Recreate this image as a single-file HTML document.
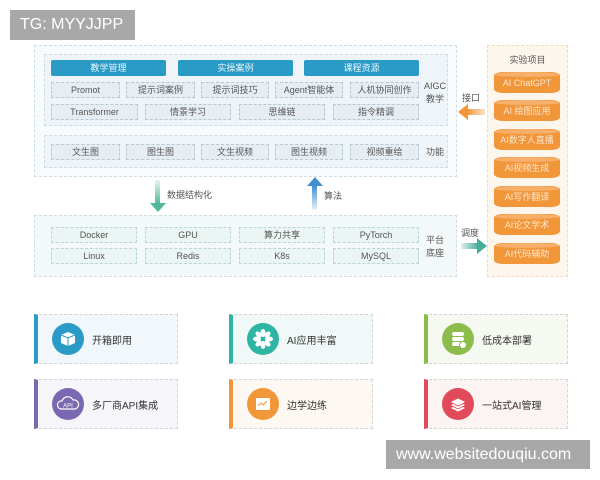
<!DOCTYPE html>
<html><head><meta charset="utf-8"><style>
*{margin:0;padding:0;box-sizing:border-box}
body{width:600px;height:480px;background:#fff;position:relative;overflow:hidden;font-family:"Liberation Sans","Noto Sans CJK SC",sans-serif;color:#444}
.a{position:absolute}
.box{position:absolute;border:1px dashed #cfdde6}
.it{position:absolute;height:16px;background:#e6eef4;border:1px dashed #b9c9d4;font-size:9px;line-height:14px;text-align:center;color:#555}
.pl{background:#eaf5f4;border-color:#bcd6d4}
.bb{position:absolute;height:16px;background:#2a9bc6;color:#e8f6fb;font-size:9px;line-height:16px;text-align:center;border-radius:2px}
.lb{position:absolute;font-size:9px;color:#555;line-height:13px;text-align:center}
.cy{position:absolute;left:494px;width:66px;height:21px;background:#f2963a;border-radius:9px/4px;color:#fde6cc;font-size:9px;line-height:22px;text-align:center}
.cy:before{content:"";position:absolute;left:0;right:0;top:0;height:5px;border-radius:50%;background:#f6b06b}
.card{position:absolute;width:144px;height:50px;border:1px dashed #d4d4d4;border-left:4px solid;font-size:10px;color:#333}
.card .c{position:absolute;left:14px;top:8px;width:32px;height:32px;border-radius:50%}
.card .c svg{position:absolute;left:0;top:0}
.card span{position:absolute;left:54px;top:17px}
.wm{position:absolute;background:#a8a8a8;color:#fff;font-size:16px}
</style></head><body>
<div class="box" style="left:34px;top:45px;width:423px;height:132px;background:#f8fbfd"></div>
<div class="box" style="left:44px;top:54px;width:404px;height:72px;background:#eef4f8"></div>
<div class="box" style="left:44px;top:135px;width:404px;height:33px;background:#eef4f8"></div>
<div class="bb" style="left:51px;top:60px;width:115px">教学管理</div>
<div class="bb" style="left:178px;top:60px;width:115px">实操案例</div>
<div class="bb" style="left:304px;top:60px;width:115px">课程资源</div>
<div class="it" style="left:51px;top:82px;width:69px">Promot</div>
<div class="it" style="left:126px;top:82px;width:69px">提示词案例</div>
<div class="it" style="left:201px;top:82px;width:68px">提示词技巧</div>
<div class="it" style="left:275px;top:82px;width:68px">Agent智能体</div>
<div class="it" style="left:350px;top:82px;width:69px">人机协同创作</div>
<div class="it" style="left:51px;top:104px;width:87px">Transformer</div>
<div class="it" style="left:145px;top:104px;width:86px">情景学习</div>
<div class="it" style="left:239px;top:104px;width:86px">思维链</div>
<div class="it" style="left:333px;top:104px;width:86px">指令精调</div>
<div class="lb" style="left:422px;top:80px;width:26px">AIGC<br>教学</div>
<div class="it" style="left:51px;top:144px;width:69px">文生图</div>
<div class="it" style="left:126px;top:144px;width:69px">图生图</div>
<div class="it" style="left:201px;top:144px;width:68px">文生视频</div>
<div class="it" style="left:275px;top:144px;width:68px">图生视频</div>
<div class="it" style="left:350px;top:144px;width:69px">视频重绘</div>
<div class="lb" style="left:422px;top:146px;width:26px">功能</div>
<div class="a" style="left:155px;top:180px;width:5px;height:24px;background:linear-gradient(#e8f6f2,#4fb79a)"></div>
<div class="a" style="left:150px;top:203px;border-left:8px solid transparent;border-right:8px solid transparent;border-top:9px solid #4fb79a"></div>
<div class="lb" style="left:167px;top:189px">数据结构化</div>
<div class="a" style="left:312px;top:186px;width:5px;height:24px;background:linear-gradient(#3f8fd0,#e8f2fa)"></div>
<div class="a" style="left:307px;top:177px;border-left:8px solid transparent;border-right:8px solid transparent;border-bottom:9px solid #3f8fd0"></div>
<div class="lb" style="left:324px;top:190px">算法</div>
<div class="box" style="left:34px;top:215px;width:423px;height:62px;background:#f2f9f8"></div>
<div class="it pl" style="left:51px;top:227px;width:86px">Docker</div>
<div class="it pl" style="left:145px;top:227px;width:86px">GPU</div>
<div class="it pl" style="left:239px;top:227px;width:86px">算力共享</div>
<div class="it pl" style="left:333px;top:227px;width:86px">PyTorch</div>
<div class="it pl" style="left:51px;top:248px;width:86px">Linux</div>
<div class="it pl" style="left:145px;top:248px;width:86px">Redis</div>
<div class="it pl" style="left:239px;top:248px;width:86px">K8s</div>
<div class="it pl" style="left:333px;top:248px;width:86px">MySQL</div>
<div class="lb" style="left:422px;top:234px;width:26px">平台<br>底座</div>
<div class="box" style="left:487px;top:45px;width:81px;height:232px;background:#fdf6ec;border-color:#eedcc4"></div>
<div class="lb" style="left:487px;top:54px;width:81px">实验项目</div>
<div class="cy" style="top:72px">AI ChatGPT</div>
<div class="cy" style="top:100px">AI 绘图应用</div>
<div class="cy" style="top:129px">AI数字人直播</div>
<div class="cy" style="top:157px">AI视频生成</div>
<div class="cy" style="top:186px">AI写作翻译</div>
<div class="cy" style="top:214px">AI论文学术</div>
<div class="cy" style="top:243px">AI代码辅助</div>
<div class="lb" style="left:462px;top:92px">接口</div>
<div class="a" style="left:467px;top:109px;width:18px;height:6px;background:linear-gradient(90deg,#f2963a,#fbe3c8)"></div>
<div class="a" style="left:458px;top:104px;border-top:8px solid transparent;border-bottom:8px solid transparent;border-right:10px solid #f2963a"></div>
<div class="lb" style="left:461px;top:227px">调度</div>
<div class="a" style="left:461px;top:243px;width:17px;height:6px;background:linear-gradient(90deg,#dff2ee,#49ad9c)"></div>
<div class="a" style="left:477px;top:238px;border-top:8px solid transparent;border-bottom:8px solid transparent;border-left:10px solid #49ad9c"></div>

<div class="card" style="left:34px;top:314px;border-left-color:#2a9bc6;background:#f1f7fb"><div class="c" style="background:#2a9bc6"><svg width="32" height="32"><path d="M9 12 L16 9 L23 12 L23 20 L16 23 L9 20Z" fill="#fff"/><path d="M9 12 L16 15 L23 12 M16 15 V23" stroke="#2a9bc6" fill="none"/></svg></div><span>开箱即用</span></div>
<div class="card" style="left:229px;top:314px;border-left-color:#2eb5a4;background:#f0f8f8"><div class="c" style="background:#2eb5a4"><svg width="32" height="32"><g fill="#fff"><ellipse cx="16" cy="10" rx="2.5" ry="4"/><ellipse cx="16" cy="22" rx="2.5" ry="4"/><ellipse cx="10" cy="16" rx="4" ry="2.5"/><ellipse cx="22" cy="16" rx="4" ry="2.5"/><ellipse cx="11.5" cy="11.5" rx="2.3" ry="3.6" transform="rotate(-45 11.5 11.5)"/><ellipse cx="20.5" cy="20.5" rx="2.3" ry="3.6" transform="rotate(-45 20.5 20.5)"/><ellipse cx="20.5" cy="11.5" rx="2.3" ry="3.6" transform="rotate(45 20.5 11.5)"/><ellipse cx="11.5" cy="20.5" rx="2.3" ry="3.6" transform="rotate(45 11.5 20.5)"/></g></svg></div><span>AI应用丰富</span></div>
<div class="card" style="left:424px;top:314px;border-left-color:#8cbd4c;background:#f5f9f1"><div class="c" style="background:#8cbd4c"><svg width="32" height="32"><g fill="#fff"><rect x="10" y="9" width="12" height="4" rx="2"/><rect x="10" y="14" width="12" height="4" rx="2"/><rect x="10" y="19" width="12" height="4" rx="2"/><circle cx="21" cy="22" r="3.5" stroke="#8cbd4c"/></g></svg></div><span>低成本部署</span></div>
<div class="card" style="left:34px;top:379px;border-left-color:#7a69b1;background:#f5f5fa"><div class="c" style="background:#7a69b1"><svg width="32" height="32"><path d="M9 21 A4 4 0 0 1 10 13 A6 6 0 0 1 21 12 A4.5 4.5 0 0 1 23 21Z" fill="none" stroke="#fff" stroke-width="1.2"/><text x="16" y="19.5" font-size="6" fill="#fff" text-anchor="middle" font-family="Liberation Sans">API</text></svg></div><span>多厂商API集成</span></div>
<div class="card" style="left:229px;top:379px;border-left-color:#f2963a;background:#fdf8f1"><div class="c" style="background:#f2963a"><svg width="32" height="32"><rect x="9" y="10" width="14" height="12" fill="#fff"/><path d="M11 18 L14 15 L16 17 L20 13" stroke="#f2963a" fill="none"/></svg></div><span>边学边练</span></div>
<div class="card" style="left:424px;top:379px;border-left-color:#e04a5a;background:#fcf3f3"><div class="c" style="background:#e04a5a"><svg width="32" height="32"><g fill="#fff" stroke="#e04a5a" stroke-width=".8"><path d="M8 20 L16 24 L24 20 L16 16Z"/><path d="M8 17 L16 21 L24 17 L16 13Z"/><path d="M8 14 L16 18 L24 14 L16 10Z"/></g></svg></div><span>一站式AI管理</span></div>

<div class="wm" style="left:10px;top:10px;width:125px;height:30px;line-height:30px;padding-left:10px">TG: MYYJJPP</div>
<div class="wm" style="left:386px;top:440px;width:204px;height:29px;line-height:29px;padding-left:10px">www.websitedouqiu.com</div>
</body></html>
